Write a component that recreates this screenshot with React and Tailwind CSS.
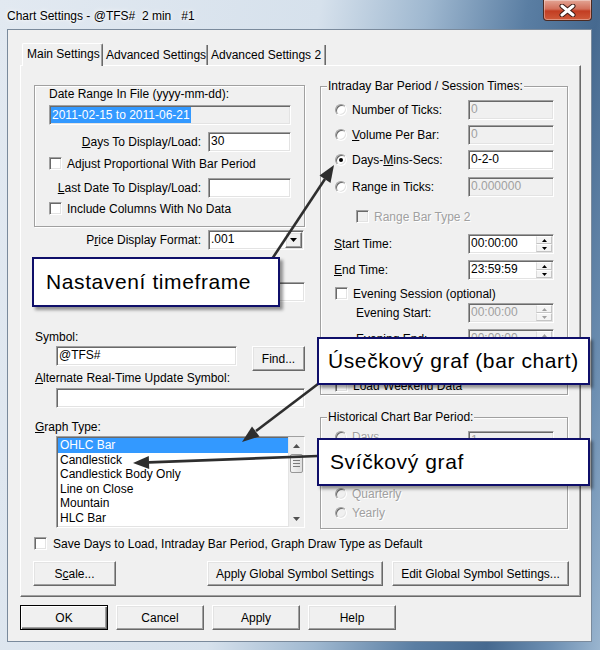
import React from "react";

const SUNKEN =
  "border border-t-[#a0a0a0] border-l-[#a0a0a0] border-r-white border-b-white shadow-[inset_1px_1px_0_#696969,inset_-1px_-1px_0_#e3e3e3]";
const RAISED =
  "border border-t-white border-l-white border-r-[#696969] border-b-[#696969] shadow-[inset_-1px_-1px_0_#a0a0a0,inset_1px_1px_0_#e3e3e3]";
const GRAYTXT = "text-[#a0a0a0] [text-shadow:1px_1px_0_#fff]";
const GROUP =
  "border border-[#a0a0a0] shadow-[inset_1px_1px_0_#fff,1px_1px_0_#fff]";

function TextBox({ className = "", disabled = false, children }) {
  return (
    <div
      className={`h-[20px] shrink-0 flex items-start pt-[1px] pl-[2px] overflow-hidden whitespace-nowrap ${SUNKEN} ${
        disabled ? "bg-[#f0f0f0] text-[#a0a0a0]" : "bg-white text-black"
      } ${className}`}
    >
      {children}
    </div>
  );
}

function CheckBox({ disabled = false }) {
  return (
    <div
      className={`w-[13px] h-[13px] shrink-0 ${SUNKEN} ${
        disabled ? "bg-[#f0f0f0]" : "bg-white"
      }`}
    />
  );
}

function Radio({ checked = false, disabled = false }) {
  return (
    <div
      className={`w-[12px] h-[12px] shrink-0 rounded-full border border-t-[#a0a0a0] border-l-[#a0a0a0] border-r-white border-b-white shadow-[inset_1px_1px_0_#696969,inset_-1px_-1px_0_#e3e3e3] flex items-center justify-center ${
        disabled ? "bg-[#f0f0f0]" : "bg-white"
      }`}
    >
      {checked && <div className="w-[4px] h-[4px] rounded-full bg-black" />}
    </div>
  );
}

function Btn({ className = "", def = false, children }) {
  return (
    <div
      className={`h-[25px] shrink-0 flex items-center justify-center bg-[#f0f0f0] whitespace-nowrap ${
        def
          ? "border border-black shadow-[inset_1px_1px_0_#fff,inset_-1px_-1px_0_#696969,inset_-2px_-2px_0_#a0a0a0]"
          : RAISED
      } ${className}`}
    >
      {children}
    </div>
  );
}

function Tri({ dir = "down", color = "#000", w = 7, h = 4 }) {
  const pts =
    dir === "down" ? `0,0 ${w},0 ${w / 2},${h}` : `0,${h} ${w},${h} ${w / 2},0`;
  return (
    <svg width={w} height={h} viewBox={`0 0 ${w} ${h}`} className="block">
      <polygon points={pts} fill={color} />
    </svg>
  );
}

function SpinBtn({ dir, disabled }) {
  return (
    <div className="flex-1 flex items-center justify-center bg-[#f4f4f4] border border-t-white border-l-[#dcdcdc] border-r-[#c4c4c4] border-b-[#c4c4c4]">
      <Tri dir={dir} w={5} h={3} color={disabled ? "#a0a0a0" : "#000"} />
    </div>
  );
}

function Spinner({ value, disabled = false }) {
  return (
    <div
      className={`w-[86px] h-[20px] shrink-0 flex ${SUNKEN} ${
        disabled ? "bg-[#f0f0f0] text-[#a0a0a0]" : "bg-white text-black"
      }`}
    >
      <div className="flex-1 pl-[2px] pt-[1px]">{value}</div>
      <div className="w-[17px] flex flex-col pr-[1px] py-[1px]">
        <SpinBtn dir="up" disabled={disabled} />
        <SpinBtn dir="down" disabled={disabled} />
      </div>
    </div>
  );
}

function Row({ className = "", children }) {
  return <div className={`flex items-center shrink-0 ${className}`}>{children}</div>;
}

const graphTypes = [
  "OHLC Bar",
  "Candlestick",
  "Candlestick Body Only",
  "Line on Close",
  "Mountain",
  "HLC Bar",
];

function Scrollbar() {
  return (
    <div className="w-[16px] h-full flex flex-col bg-[#eeeeee] border-l border-[#e4e4e4]">
      <div className="h-[17px] flex items-center justify-center">
        <Tri dir="up" w={7} h={4} color="#505050" />
      </div>
      <div className="h-[19px] mx-[1px] rounded-[2px] border border-[#979797] bg-[linear-gradient(to_right,#f4f4f4,#dedede)] flex flex-col items-center justify-center gap-[2px]">
        <div className="w-[7px] h-[1px] bg-[#7b7b7b]" />
        <div className="w-[7px] h-[1px] bg-[#7b7b7b]" />
        <div className="w-[7px] h-[1px] bg-[#7b7b7b]" />
      </div>
      <div className="flex-1" />
      <div className="h-[17px] flex items-center justify-center">
        <Tri dir="down" w={7} h={4} color="#505050" />
      </div>
    </div>
  );
}

function Note({ className = "", children }) {
  return (
    <div
      className={`absolute bg-white border-2 border-[#0f0f6a] shadow-[3px_3px_3px_rgba(0,0,0,0.4)] flex items-center text-[21px] leading-[24px] tracking-[0.6px] text-black font-['Liberation_Sans',Arial,sans-serif] ${className}`}
    >
      {children}
    </div>
  );
}

export default function App() {
  return (
    <div className="relative w-[600px] h-[650px] overflow-hidden font-['Liberation_Sans',Arial,sans-serif] text-[12px] leading-[14px] text-black bg-[linear-gradient(100deg,#e2e9f1_0%,#d6e1ec_45%,#9fb8d0_60%,#5a7ea3_74%,#46698f_84%,#6d8fb2_93%,#9ab5cf_100%)]">
      {/* title bar */}
      <div className="h-[29px] flex items-start">
        <div className="flex-1 pl-[7px] pt-[9px] whitespace-pre text-[12px] [text-shadow:0_0_6px_#fff,0_0_3px_#fff]">
          {"Chart Settings - @TFS#  2 min   #1"}
        </div>
        <div className="w-[49px] h-[21px] mr-[8px] rounded-b-[4px] border border-t-0 border-[#4b2a22] bg-[linear-gradient(to_bottom,#e3a595_0%,#d26f5a_45%,#c23d22_55%,#cf5a3a_100%)] shadow-[inset_0_0_0_1px_rgba(255,255,255,0.35)] flex items-center justify-center">
          <svg width="17" height="13" viewBox="0 0 17 13">
            <path d="M3 2 L14 11 M14 2 L3 11" stroke="#3a1a14" strokeWidth="5" strokeLinecap="round" />
            <path d="M3 2 L14 11 M14 2 L3 11" stroke="#ffffff" strokeWidth="3" strokeLinecap="round" />
          </svg>
        </div>
      </div>

      {/* dialog body */}
      <div className="ml-[7px] w-[585px] h-[613px] border border-[#7a8a9c] bg-[#f0f0f0] flex flex-col pl-[12px] pt-[13px]">
        {/* tabs */}
        <div className="h-[22px] flex items-end pl-[2px] relative z-10">
          <div className="w-[81px] h-[23px] -mb-[1px] bg-[#f0f0f0] rounded-t-[2px] border-l border-t border-white border-r border-r-[#696969] shadow-[inset_-1px_0_0_#a0a0a0] pl-[4px] pt-[3px] whitespace-nowrap">
            Main Settings
          </div>
          <div className="w-[105px] h-[20px] border-r border-r-[#696969] shadow-[inset_-1px_0_0_#a0a0a0] pl-[3px] pt-[3px] whitespace-nowrap">
            Advanced Settings
          </div>
          <div className="w-[118px] h-[20px] border-r border-r-[#696969] shadow-[inset_-1px_0_0_#a0a0a0] pl-[3px] pt-[3px] whitespace-nowrap">
            Advanced Settings 2
          </div>
        </div>

        {/* tab panel */}
        <div className="w-[561px] h-[532px] shrink-0 border-l border-t border-white border-r border-b border-r-[#696969] border-b-[#696969] shadow-[inset_-1px_-1px_0_#a0a0a0] flex items-start pl-[13px] pt-[19px]">
          {/* left column */}
          <div className="w-[271px] shrink-0 flex flex-col">
            <div className={`h-[142px] shrink-0 flex flex-col pl-[14px] pt-[1px] ${GROUP}`}>
              <div className="whitespace-nowrap">Date Range In File (yyyy-mm-dd):</div>
              <div className={`mt-[4px] w-[242px] h-[20px] flex items-stretch py-[1px] pl-[1px] bg-[#f0f0f0] ${SUNKEN}`}>
                <span className="bg-[#3399ff] text-white px-[1px] pt-[1px] whitespace-nowrap">
                  2011-02-15 to 2011-06-21
                </span>
              </div>
              <Row className="mt-[7px] h-[20px]">
                <div className="w-[152px] text-right whitespace-nowrap">
                  <u>D</u>ays To Display/Load:
                </div>
                <TextBox className="ml-[7px] w-[83px]">30</TextBox>
              </Row>
              <Row className="mt-[5px] h-[13px]">
                <CheckBox />
                <div className="ml-[5px] whitespace-nowrap">Adjust Proportional With Bar Period</div>
              </Row>
              <Row className="mt-[8px] h-[20px]">
                <div className="w-[152px] text-right whitespace-nowrap">
                  <u>L</u>ast Date To Display/Load:
                </div>
                <TextBox className="ml-[7px] w-[83px]" />
              </Row>
              <Row className="mt-[4px] h-[13px]">
                <CheckBox />
                <div className="ml-[5px] whitespace-nowrap">Include Columns With No Data</div>
              </Row>
            </div>

            <Row className="mt-[3px] h-[20px]">
              <div className="w-[167px] text-right whitespace-nowrap">
                P<u>r</u>ice Display Format:
              </div>
              <div className={`ml-[7px] w-[96px] h-[20px] flex bg-white ${SUNKEN}`}>
                <div className="flex-1 pl-[2px] pt-[1px]">.001</div>
                <div className={`w-[17px] my-[1px] mr-[1px] bg-[#f0f0f0] flex items-center justify-center ${RAISED}`}>
                  <Tri dir="down" w={7} h={4} />
                </div>
              </div>
            </Row>

            <TextBox className="mt-[32px] ml-[174px] w-[97px]" />

            <div className="mt-[28px] pl-[1px]">Symbol:</div>
            <div className="mt-[2px] flex items-start pl-[22px]">
              <TextBox className="w-[181px]">@TFS#</TextBox>
              <Btn className="ml-[15px] w-[53px] h-[22px]">Find...</Btn>
            </div>
            <div className="mt-[0px] pl-[1px] whitespace-nowrap">
              <u>A</u>lternate Real-Time Update Symbol:
            </div>
            <TextBox className="mt-[3px] ml-[22px] w-[249px]" />
            <div className="mt-[12px] pl-[1px]">
              <u>G</u>raph Type:
            </div>
            <div className={`mt-[2px] ml-[22px] w-[249px] h-[92px] shrink-0 flex bg-white ${SUNKEN}`}>
              <div className="flex-1 pt-[1px] pl-[1px] overflow-hidden">
                {graphTypes.map((g, i) => (
                  <div
                    key={g}
                    className={`h-[14.6px] leading-[14.6px] pl-[2px] whitespace-nowrap ${
                      i === 0 ? "bg-[#3399ff] text-white" : ""
                    }`}
                  >
                    {g}
                  </div>
                ))}
              </div>
              <Scrollbar />
            </div>

            <Row className="mt-[9px] h-[13px]">
              <CheckBox />
              <div className="ml-[6px] whitespace-nowrap">
                Save Days to Load, Intraday Bar Period, Graph Draw Type as Default
              </div>
            </Row>

            <div className="mt-[11px] -ml-[1px] flex">
              <Btn className="w-[83px]">
                S<u>c</u>ale...
              </Btn>
              <Btn className="ml-[91px] w-[176px]">Apply Global Symbol Settings</Btn>
              <Btn className="ml-[9px] w-[177px]">Edit Global Symbol Settings...</Btn>
            </div>
          </div>

          {/* right column */}
          <div className="ml-[15px] w-[248px] shrink-0 flex flex-col">
            <div className={`mt-[1px] h-[309px] flex flex-col ${GROUP}`}>
              <div className="-mt-[8px] ml-[6px] px-[1px] self-start bg-[#f0f0f0] whitespace-nowrap">
                Intraday Bar Period / Session Times:
              </div>
              <Row className="mt-[7px] h-[20px] pl-[14px]">
                <Radio />
                <div className="ml-[5px] w-[116px] whitespace-nowrap">Number of Ticks:</div>
                <TextBox disabled className="w-[86px]">0</TextBox>
              </Row>
              <Row className="mt-[5px] h-[20px] pl-[14px]">
                <Radio />
                <div className="ml-[5px] w-[116px] whitespace-nowrap">
                  <u>V</u>olume Per Bar:
                </div>
                <TextBox disabled className="w-[86px]">0</TextBox>
              </Row>
              <Row className="mt-[5px] h-[20px] pl-[14px]">
                <Radio checked />
                <div className="ml-[5px] w-[116px] whitespace-nowrap">
                  Days-<u>M</u>ins-Secs:
                </div>
                <TextBox className="w-[86px]">0-2-0</TextBox>
              </Row>
              <Row className="mt-[7px] h-[20px] pl-[14px]">
                <Radio />
                <div className="ml-[5px] w-[116px] whitespace-nowrap">Range in Ticks:</div>
                <TextBox disabled className="w-[86px]">0.000000</TextBox>
              </Row>
              <Row className="mt-[13px] h-[13px] pl-[35px]">
                <CheckBox disabled />
                <div className={`ml-[5px] whitespace-nowrap ${GRAYTXT}`}>Range Bar Type 2</div>
              </Row>
              <Row className="mt-[11px] h-[20px] pl-[13px]">
                <div className="w-[134px] whitespace-nowrap">
                  <u>S</u>tart Time:
                </div>
                <Spinner value="00:00:00" />
              </Row>
              <Row className="mt-[6px] h-[20px] pl-[13px]">
                <div className="w-[134px] whitespace-nowrap">
                  <u>E</u>nd Time:
                </div>
                <Spinner value="23:59:59" />
              </Row>
              <Row className="mt-[7px] h-[13px] pl-[14px]">
                <CheckBox />
                <div className="ml-[5px] whitespace-nowrap">Evening Session (optional)</div>
              </Row>
              <Row className="mt-[3px] h-[20px] pl-[35px]">
                <div className="w-[112px] whitespace-nowrap">Evening Start:</div>
                <Spinner value="00:00:00" disabled />
              </Row>
              <Row className="mt-[6px] h-[20px] pl-[35px]">
                <div className="w-[112px] whitespace-nowrap">Evening End:</div>
                <Spinner value="00:00:00" disabled />
              </Row>
              <Row className="mt-[30px] h-[13px] pl-[14px]">
                <CheckBox />
                <div className="ml-[5px] whitespace-nowrap">Load Weekend Data</div>
              </Row>
            </div>

            <div className={`mt-[22px] h-[112px] flex flex-col ${GROUP}`}>
              <div className="-mt-[8px] ml-[6px] px-[1px] self-start bg-[#f0f0f0] whitespace-nowrap">
                Historical Chart Bar Period:
              </div>
              <Row className="mt-[3px] h-[19px] pl-[14px] items-start">
                <div className="mt-[4px]">
                  <Radio disabled />
                </div>
                <div className={`ml-[5px] mt-[3px] w-[116px] ${GRAYTXT}`}>Days</div>
                <TextBox disabled className="mt-[4px] w-[86px]">1</TextBox>
              </Row>
              {["Weekly", "Monthly", "Quarterly", "Yearly"].map((p) => (
                <Row key={p} className="h-[19px] pl-[14px]">
                  <Radio disabled />
                  <div className={`ml-[5px] ${GRAYTXT}`}>{p}</div>
                </Row>
              ))}
            </div>
          </div>
        </div>

        {/* dialog buttons */}
        <div className="mt-[8px] flex gap-[8px]">
          <Btn def className="w-[88px]">OK</Btn>
          <Btn className="w-[88px]">Cancel</Btn>
          <Btn className="w-[88px]">Apply</Btn>
          <Btn className="w-[88px]">Help</Btn>
        </div>
      </div>

      {/* annotations */}
      <svg className="absolute inset-0 pointer-events-none" width="600" height="650" viewBox="0 0 600 650">
        <g stroke="#2e2e2e" strokeWidth="2.6" fill="#2e2e2e">
          <line x1="270" y1="262" x2="325" y2="179" />
          <polygon points="334,165 330.5,183 319.5,175.5" stroke="none" />
          <line x1="318" y1="384" x2="256" y2="431" />
          <polygon points="242,442 259.5,436.5 252,426.5" stroke="none" />
          <line x1="318" y1="456" x2="149" y2="462.4" />
          <polygon points="133,463 149.2,469 148.8,456" stroke="none" />
        </g>
      </svg>
      <Note className="left-[32px] top-[257px] w-[248px] h-[50px] pl-[12px]">Nastavení timeframe</Note>
      <Note className="left-[317px] top-[337px] w-[273px] h-[48px] pl-[9px]">Úsečkový graf (bar chart)</Note>
      <Note className="left-[317px] top-[438px] w-[273px] h-[48px] pl-[11px]">Svíčkový graf</Note>
    </div>
  );
}
